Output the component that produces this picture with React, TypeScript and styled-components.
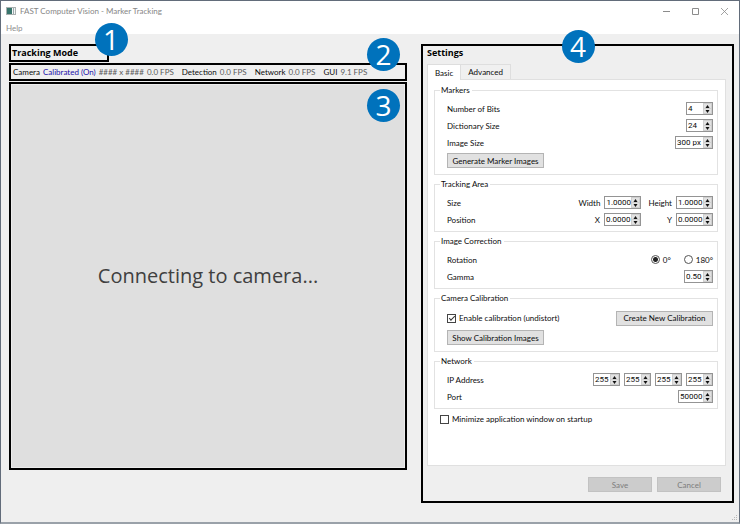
import React, { useId, useState } from "react";
import styled, { createGlobalStyle, css } from "styled-components";

const GlobalStyle = createGlobalStyle`
  *, *::before, *::after { box-sizing: border-box; }
  body {
    margin: 0;
    background: #efefef;
    color: #0c0c0c;
    font: 8px/12px Lato, "Open Sans", sans-serif;
  }
  button, input { font: inherit; color: inherit; }
`;

const AppWindow = styled.div`
  display: flex;
  flex-direction: column;
  min-height: 100vh;
  border: 1px solid #626c7a;
  border-bottom: 2px solid #9aa1a9;
  background: #efefef;
`;

const TitleBar = styled.header`
  display: flex;
  align-items: center;
  height: 20px;
  padding-left: 5px;
  background: #fff;
  color: #868686;
`;

const AppTitle = styled.h1`
  flex: 1;
  margin: 0 0 0 4px;
  font-size: 8px;
  font-weight: 400;
`;

const CaptionButton = styled.button`
  display: flex;
  align-items: center;
  justify-content: center;
  width: 29px;
  height: 18px;
  padding: 0;
  border: 0;
  background: none;
  color: #8c8c8c;
`;

const MenuBar = styled.nav`
  display: flex;
  height: 13px;
  padding-left: 5px;
  background: #fff;
`;

const MenuButton = styled.button`
  padding: 0;
  border: 0;
  background: none;
  color: #8e8e8e;
`;

const Main = styled.main`
  flex: 1;
  display: grid;
  grid-template-columns: 398fr 313fr;
  gap: 14px;
  padding: 10px 5px 0 8px;
`;

const frame = css`
  position: relative;
  border: 2px solid #000;
`;

const TrackingColumn = styled.section`
  display: flex;
  flex-direction: column;
  gap: 1px;
  padding-bottom: 33px;
`;

const ModeFrame = styled.div`
  ${frame}
  align-self: flex-start;
  width: 25%;
  min-width: 80px;
  height: 18px;
  padding-left: 1px;
`;

const PaneTitle = styled.h2`
  margin: 0;
  color: #000;
  font: 700 9px/14px "Open Sans", "Noto Sans", sans-serif;
  white-space: nowrap;
`;

const StatusFrame = styled.div`
  ${frame}
  display: flex;
  align-items: center;
  gap: 8px;
  height: 18px;
  padding-left: 2px;
  white-space: nowrap;
`;

const StatusItem = styled.span`
  display: flex;
  gap: 3px;
`;

const StatusValue = styled.span<{ $link?: boolean }>`
  color: ${(p) => (p.$link ? "#1a10a8" : "#5c5c5c")};
`;

const VideoFrame = styled.div`
  ${frame}
  flex: 1;
  display: flex;
  align-items: center;
  justify-content: center;
  background: #dfdfdf;
  box-shadow: inset 0 0 0 1px #ececec;
  color: #404040;
  font: 20px/28px "Open Sans", "Noto Sans", sans-serif;
`;

const Badge = styled.span<{ $top: number; $right?: number; $middle?: boolean }>`
  position: absolute;
  top: ${(p) => p.$top}px;
  ${(p) => (p.$middle ? "left: 50%; margin-left: -16px;" : `right: ${p.$right}px;`)}
  width: 33px;
  height: 33px;
  border-radius: 50%;
  background: #0072bc;
  color: #fff;
  font: 28px/33px "Open Sans", "Noto Sans", sans-serif;
  text-align: center;
  z-index: 1;
`;

const SettingsFrame = styled.section`
  ${frame}
  display: flex;
  flex-direction: column;
  padding: 0 5px 9px 4px;
`;

const TabList = styled.div`
  display: flex;
  align-items: flex-end;
  height: 16px;
  margin-top: 3px;
`;

const Tab = styled.button<{ $active: boolean }>`
  height: ${(p) => (p.$active ? 16 : 15)}px;
  padding: 0 7px;
  border: 1px solid #dedede;
  border-bottom: 0;
  background: ${(p) => (p.$active ? "#fff" : "#f0f0f0")};
  margin-bottom: ${(p) => (p.$active ? -1 : 0)}px;
  position: relative;
  z-index: ${(p) => (p.$active ? 1 : 0)};
  & + & { border-left: 0; }
`;

const TabPanel = styled.div`
  flex: 1;
  display: flex;
  flex-direction: column;
  gap: 3px;
  margin-right: 1px;
  padding: 4px 7px 0 6px;
  border: 1px solid #e0e0e0;
  background: #fff;
`;

const Group = styled.fieldset<{ $roomy?: boolean }>`
  display: flex;
  flex-direction: column;
  gap: 4px;
  min-width: 0;
  margin: 0;
  padding: 6px 4px ${(p) => (p.$roomy ? 6 : 5)}px 12px;
  border: 1px solid #e2e2e2;
`;

const Legend = styled.legend`
  margin-left: -7px;
  padding: 0 2px 0 1px;
  line-height: 12px;
`;

const Row = styled.div`
  display: flex;
  align-items: center;
  justify-content: space-between;
  min-height: 13px;
`;

const ButtonRow = styled(Row)`
  min-height: 16px;
`;

const Fields = styled.div<{ $gap: number }>`
  display: flex;
  align-items: center;
  gap: ${(p) => p.$gap}px;
`;

const Field = styled.div`
  display: flex;
  align-items: center;
  gap: 4px;
`;

const SpinFrame = styled.span<{ $width: number }>`
  display: flex;
  width: ${(p) => p.$width}px;
  height: 13px;
  border: 1px solid #949494;
  background: #fff;
`;

const SpinInput = styled.input`
  flex: 1;
  min-width: 0;
  height: 11px;
  padding: 0 0 0 1px;
  border: 0;
  outline: 0;
  background: none;
  font: 8px/11px Roboto, "Liberation Sans", sans-serif;
`;

const SpinButtons = styled.span`
  display: flex;
  flex-direction: column;
  width: 9px;
  background: #e2e2e2;
`;

const StepButton = styled.button`
  flex: 1;
  display: flex;
  align-items: center;
  justify-content: center;
  min-height: 0;
  padding: 0;
  border: 1px solid #cfcfcf;
  background: none;
  & + & { border-top: 0; }
`;

const PushButton = styled.button<{ $width: number }>`
  width: ${(p) => p.$width}px;
  height: 15px;
  padding: 0;
  border: 1px solid #b4b4b4;
  background: #e1e1e1;
  line-height: 12px;
  white-space: nowrap;
  &:disabled {
    border-color: #c2c2c2;
    background: #cccccc;
    color: #7c7c7c;
  }
`;

const Check = styled.label`
  display: flex;
  align-items: center;
  gap: 3px;
`;

const CheckInput = styled.input`
  appearance: none;
  width: 9px;
  height: 9px;
  margin: 0;
  border: 1px solid #444;
  background: #fff;
  &:checked::before {
    content: "";
    display: block;
    width: 6px;
    height: 3px;
    margin: 1px 0 0 1px;
    border: solid #333;
    border-width: 0 0 1px 1px;
    transform: rotate(-45deg);
  }
`;

const RadioInput = styled.input`
  appearance: none;
  width: 9px;
  height: 9px;
  margin: 0;
  border: 1px solid #555;
  border-radius: 50%;
  background: #fff;
  &:checked {
    background: radial-gradient(circle, #222 2px, #fff 3px);
  }
`;

const StartupRow = styled.div`
  display: flex;
  padding: 1px 0 4px 6px;
`;

const Actions = styled.footer`
  display: flex;
  justify-content: flex-end;
  gap: 5px;
  padding: 11px 6px 0 0;
`;

const StatusBar = styled.footer`
  display: flex;
  justify-content: flex-end;
  align-items: flex-end;
  height: 19px;
  padding-right: 1px;
`;

interface SpinProps {
  value: number;
  width: number;
  step?: number;
  decimals?: number;
  suffix?: string;
  id?: string;
  label?: string;
}

function SpinBox({ value, width, step = 1, decimals = 0, suffix = "", id, label }: SpinProps) {
  const format = (n: number) => n.toFixed(decimals) + suffix;
  const [text, setText] = useState(format(value));
  const bump = (by: number) => setText(format((parseFloat(text) || 0) + by));
  return (
    <SpinFrame $width={width}>
      <SpinInput id={id} aria-label={label} value={text} onChange={(e) => setText(e.target.value)} />
      <SpinButtons>
        <StepButton type="button" aria-label="Increase" onClick={() => bump(step)}>
          <svg width="5" height="3" viewBox="0 0 5 3"><path d="M2.5 0L4.500 3H.5Z" fill="#111" /></svg>
        </StepButton>
        <StepButton type="button" aria-label="Decrease" onClick={() => bump(-step)}>
          <svg width="5" height="3" viewBox="0 0 5 3"><path d="M.5 0H4.500L2.500 3Z" fill="#111" /></svg>
        </StepButton>
      </SpinButtons>
    </SpinFrame>
  );
}

function SpinRow({ label, ...spin }: SpinProps & { label: string }) {
  const id = useId();
  return (
    <Row>
      <label htmlFor={id}>{label}</label>
      <SpinBox id={id} {...spin} />
    </Row>
  );
}

function SpinField({ label, ...spin }: SpinProps & { label: string }) {
  const id = useId();
  return (
    <Field>
      <label htmlFor={id}>{label}</label>
      <SpinBox id={id} {...spin} />
    </Field>
  );
}

function BasicSettings() {
  const [minimize, setMinimize] = useState(false);
  const [calibrate, setCalibrate] = useState(true);
  const [rotation, setRotation] = useState("0");
  return (
    <>
      <Group $roomy>
        <Legend>Markers</Legend>
        <SpinRow label="Number of Bits" value={4} width={27} />
        <SpinRow label="Dictionary Size" value={24} width={27} />
        <SpinRow label="Image Size" value={300} suffix=" px" width={38} />
        <PushButton type="button" $width={97}>Generate Marker Images</PushButton>
      </Group>
      <Group>
        <Legend>Tracking Area</Legend>
        <Row>
          <span>Size</span>
          <Fields $gap={7}>
            <SpinField label="Width" value={1} step={0.1} decimals={4} width={37} />
            <SpinField label="Height" value={1} step={0.1} decimals={4} width={37} />
          </Fields>
        </Row>
        <Row>
          <span>Position</span>
          <Fields $gap={26}>
            <SpinField label="X" value={0} step={0.1} decimals={4} width={37} />
            <SpinField label="Y" value={0} step={0.1} decimals={4} width={37} />
          </Fields>
        </Row>
      </Group>
      <Group>
        <Legend>Image Correction</Legend>
        <Row role="radiogroup" aria-label="Rotation">
          <span>Rotation</span>
          <Fields $gap={13}>
            {["0", "180"].map((deg) => (
              <Check key={deg}>
                <RadioInput
                  type="radio"
                  name="rotation"
                  value={deg}
                  checked={rotation === deg}
                  onChange={() => setRotation(deg)}
                />
                {deg}°
              </Check>
            ))}
          </Fields>
        </Row>
        <SpinRow label="Gamma" value={0.5} step={0.05} decimals={2} width={29} />
      </Group>
      <Group $roomy>
        <Legend>Camera Calibration</Legend>
        <ButtonRow>
          <Check>
            <CheckInput type="checkbox" checked={calibrate} onChange={(e) => setCalibrate(e.target.checked)} />
            Enable calibration (undistort)
          </Check>
          <PushButton type="button" $width={97}>Create New Calibration</PushButton>
        </ButtonRow>
        <PushButton type="button" $width={97}>Show Calibration Images</PushButton>
      </Group>
      <Group>
        <Legend>Network</Legend>
        <Row>
          <span>IP Address</span>
          <Fields $gap={4}>
            {[1, 2, 3, 4].map((n) => (
              <SpinBox key={n} label={`IP address part ${n}`} value={255} width={27} />
            ))}
          </Fields>
        </Row>
        <SpinRow label="Port" value={50000} width={35} />
      </Group>
      <StartupRow>
        <Check>
          <CheckInput type="checkbox" checked={minimize} onChange={(e) => setMinimize(e.target.checked)} />
          Minimize application window on startup
        </Check>
      </StartupRow>
    </>
  );
}

export default function App() {
  const [tab, setTab] = useState("Basic");
  return (
    <AppWindow>
      <GlobalStyle />
      <TitleBar>
        <svg width="10" height="8" viewBox="0 0 10 8" aria-hidden="true">
          <rect x="0.5" y="0.5" width="9" height="7" fill="#f4f6f6" stroke="#a9b0b0" />
          <rect x="1" y="1" width="5" height="6" fill="#37756c" />
          <rect x="7" y="1" width="1" height="6" fill="#9aa8ac" />
        </svg>
        <AppTitle>FAST Computer Vision - Marker Tracking</AppTitle>
        <CaptionButton type="button" aria-label="Minimize">
          <svg width="7" height="7" viewBox="0 0 7 7"><path d="M0 3.5H7" stroke="currentColor" /></svg>
        </CaptionButton>
        <CaptionButton type="button" aria-label="Maximize">
          <svg width="7" height="7" viewBox="0 0 7 7"><path d="M.5 .5H6.500V6.500H.5Z" fill="none" stroke="currentColor" /></svg>
        </CaptionButton>
        <CaptionButton type="button" aria-label="Close">
          <svg width="7" height="7" viewBox="0 0 7 7"><path d="M0 0L7 7M7 0L0 7" stroke="currentColor" strokeWidth="0.8" /></svg>
        </CaptionButton>
      </TitleBar>
      <MenuBar>
        <MenuButton type="button">Help</MenuButton>
      </MenuBar>
      <Main>
        <TrackingColumn>
          <ModeFrame>
            <PaneTitle>Tracking Mode</PaneTitle>
            <Badge $top={-23} $right={-21}>1</Badge>
          </ModeFrame>
          <StatusFrame>
            <StatusItem>
              Camera <StatusValue $link>Calibrated (On)</StatusValue>
              <StatusValue>#### x ####</StatusValue>
              <StatusValue>0.0 FPS</StatusValue>
            </StatusItem>
            <StatusItem>Detection <StatusValue>0.0 FPS</StatusValue></StatusItem>
            <StatusItem>Network <StatusValue>0.0 FPS</StatusValue></StatusItem>
            <StatusItem>GUI <StatusValue>9.1 FPS</StatusValue></StatusItem>
            <Badge $top={-27} $right={5}>2</Badge>
          </StatusFrame>
          <VideoFrame>
            Connecting to camera...
            <Badge $top={5} $right={5}>3</Badge>
          </VideoFrame>
        </TrackingColumn>
        <SettingsFrame>
          <Badge $top={-16} $middle>4</Badge>
          <PaneTitle>Settings</PaneTitle>
          <TabList role="tablist">
            {["Basic", "Advanced"].map((name) => (
              <Tab
                key={name}
                type="button"
                role="tab"
                aria-selected={tab === name}
                $active={tab === name}
                onClick={() => setTab(name)}
              >
                {name}
              </Tab>
            ))}
          </TabList>
          <TabPanel role="tabpanel">{tab === "Basic" && <BasicSettings />}</TabPanel>
          <Actions>
            <PushButton type="button" $width={64} disabled>Save</PushButton>
            <PushButton type="button" $width={64} disabled>Cancel</PushButton>
          </Actions>
        </SettingsFrame>
      </Main>
      <StatusBar>
        <svg width="7" height="7" viewBox="0 0 7 7" fill="#b8b8b8" aria-hidden="true">
          <path d="M5 0h1v1h-1zM3 2h1v1h-1zM5 2h1v1h-1zM1 4h1v1h-1zM3 4h1v1h-1zM5 4h1v1h-1z" />
        </svg>
      </StatusBar>
    </AppWindow>
  );
}
